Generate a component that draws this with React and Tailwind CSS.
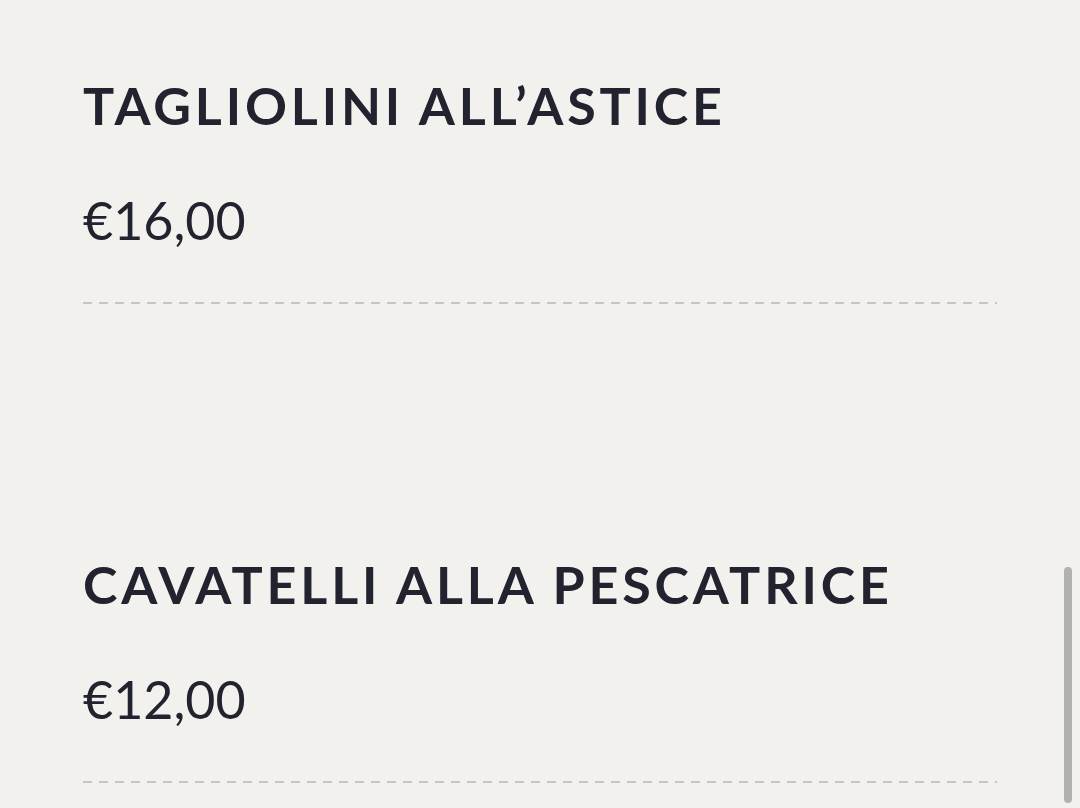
import React from 'react';

const dishes = [
  { name: 'TAGLIOLINI ALL’ASTICE', price: '€16,00' },
  { name: 'CAVATELLI ALLA PESCATRICE', price: '€12,00' },
];

const MenuItem = ({ dish }) => (
  <div className="pt-[79px] pb-[175px]">
    <h3 className="text-[52px] leading-[52px] font-bold tracking-[0.074em] text-[#23232f]">
      {dish.name}
    </h3>
    <p className="mt-[63px] text-[52px] leading-[52px] font-normal text-[#23232f]">
      {dish.price}
    </p>
    <div className="mt-[56px] h-[2px] w-full bg-[repeating-linear-gradient(to_right,#c6c6c2_0_9px,transparent_9px_16px)]" />
  </div>
);

export default function App() {
  return (
    <div className="relative h-[808px] w-[1080px] overflow-hidden bg-[#f2f1ed] font-['Lato',sans-serif]">
      <div className="pl-[83px] pr-[83px]">
        {dishes.map((dish) => (
          <MenuItem key={dish.name} dish={dish} />
        ))}
      </div>

      {/* Scrollbar thumb */}
      <div className="absolute right-[8px] top-[567px] h-[236px] w-[8px] rounded-full bg-[#b1b1ae]" />
    </div>
  );
}
